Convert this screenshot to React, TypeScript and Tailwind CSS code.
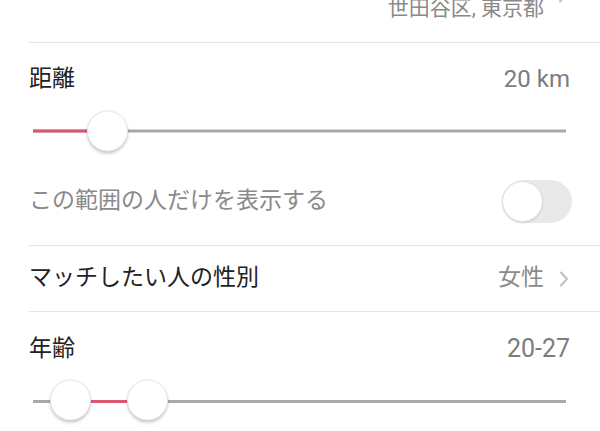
import React from 'react';

const font = { fontFamily: "Roboto, 'Noto Sans CJK JP', sans-serif" };

function Chevron({ className }: { className?: string }) {
  return (
    <svg width="10" height="16" viewBox="0 0 10 16" className={className} fill="none">
      <path d="M2 1.5 L8 8 L2 14.5" stroke="#c2c2c2" strokeWidth="2" strokeLinecap="round" strokeLinejoin="round" />
    </svg>
  );
}

function Thumb({ left }: { left: string }) {
  return (
    <div
      className={`absolute top-1/2 -translate-y-1/2 w-[41px] h-[41px] rounded-full bg-white border border-[#e6e6e6] shadow-[0_2px_3px_rgba(0,0,0,0.22)] ${left}`}
    />
  );
}

export default function App() {
  return (
    <div className="w-[600px] h-[431px] overflow-hidden bg-white" style={font}>
      <div className="pl-[29px]">
        {/* location row, cut at top */}
        <div className="h-[43px] border-b border-[#e4e4e4] flex items-start justify-end pr-[32px]">
          <span className="-mt-[4px] text-[21px] leading-[24px] text-[#8a8a8a]">世田谷区, 東京都</span>
          <Chevron className="ml-[14px] -mt-[13px]" />
        </div>

        {/* distance */}
        <div className="border-b border-[#e4e4e4]">
          <div className="h-[72px] flex items-center justify-between pr-[30px]">
            <span className="text-[23px] text-[#222]">距離</span>
            <span className="text-[24px] text-[#7c7c7c]">20 km</span>
          </div>
          <div className="relative h-[32px] ml-[4px] mr-[34px]">
            <div className="absolute left-0 right-0 top-1/2 -translate-y-1/2 h-[3px] bg-[#a9a9a9]" />
            <div className="absolute left-0 w-[56px] top-1/2 -translate-y-1/2 h-[3px] bg-[#de5670]" />
            <Thumb left="left-[54px]" />
          </div>
          <div className="h-[98px] pt-[10px] flex items-center justify-between pr-[28px]">
            <span className="text-[23px] text-[#8a8a8a]">この範囲の人だけを表示する</span>
            <div className="w-[70px] h-[43px] rounded-full bg-[#e9e9e9] flex items-center">
              <div className="w-[41px] h-[41px] rounded-full bg-white border border-[#dedede] shadow-[0_1px_2px_rgba(0,0,0,0.12)]" />
            </div>
          </div>
        </div>

        {/* gender */}
        <div className="h-[66px] border-b border-[#e4e4e4] flex items-center justify-between pr-[31px]">
          <span className="text-[23px] text-[#222]">マッチしたい人の性別</span>
          <div className="flex items-center">
            <span className="text-[23px] text-[#8a8a8a]">女性</span>
            <Chevron className="ml-[15px]" />
          </div>
        </div>

        {/* age */}
        <div className="h-[74px] flex items-center justify-between pr-[30px]">
          <span className="text-[23px] text-[#222]">年齢</span>
          <span className="text-[25px] text-[#7c7c7c]">20-27</span>
        </div>
        <div className="relative h-[28px] ml-[4px] mr-[34px]">
          <div className="absolute left-0 right-0 top-1/2 h-[3px] bg-[#a9a9a9]" />
          <div className="absolute left-[58px] w-[38px] top-1/2 h-[3px] bg-[#de5670]" />
          <Thumb left="left-[17px]" />
          <Thumb left="left-[94px]" />
        </div>
      </div>
    </div>
  );
}
